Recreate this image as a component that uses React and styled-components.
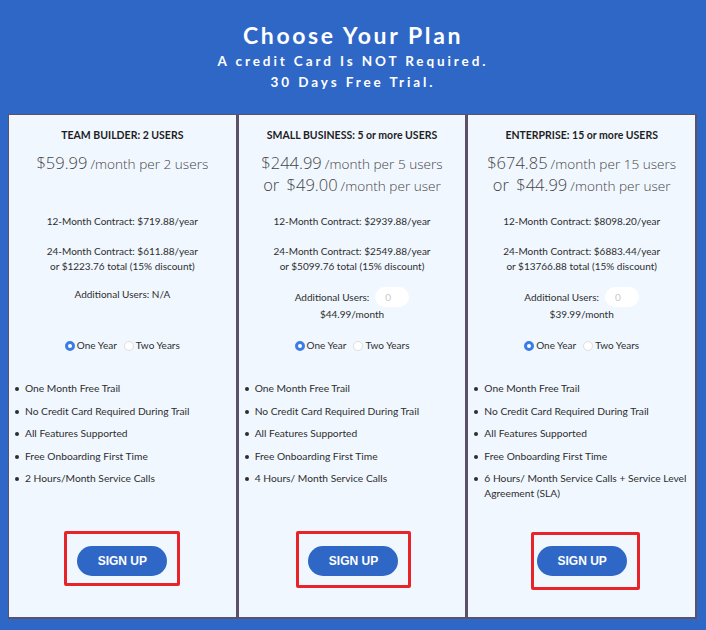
import React from 'react'
import styled, { createGlobalStyle } from 'styled-components'

const GlobalStyle = createGlobalStyle`
  html, body {
    margin: 0;
    padding: 0;
    background: #2f67c7;
  }
  * { box-sizing: border-box; }
`

const Page = styled.div`
  width: 706px;
  min-height: 630px;
  background: #2f67c7;
  padding-top: 21px;
  font-family: Lato, "Open Sans", sans-serif;
`

const Header = styled.header`
  display: flex;
  flex-direction: column;
  align-items: center;
  color: white;
  margin-bottom: 21px;
`

const Title = styled.h1`
  margin: 0;
  font-size: 23px;
  line-height: 28px;
  font-weight: 700;
  letter-spacing: 2.6px;
`

const Sub = styled.p`
  margin: 2px 0 0;
  font-size: 13.5px;
  line-height: 21px;
  font-weight: 700;
  letter-spacing: 2.9px;
  text-align: center;
`

const Cards = styled.div`
  display: grid;
  grid-template-columns: repeat(3, 1fr);
  padding: 0 9px 0 8px;
`

const Card = styled.div`
  min-height: 505px;
  background: #f1f7fe;
  border: 1px solid #5b5269;
  border-right-width: 2px;
  border-bottom-width: 2px;
  padding: 13px 6px 0;
  display: flex;
  flex-direction: column;
  color: #2e2e2e;
`

const PlanName = styled.h2`
  margin: 0;
  font-size: 10.5px;
  line-height: 14px;
  font-weight: 700;
  text-align: center;
  color: #1e1e1e;
`

const PriceBlock = styled.div`
  margin-top: 11px;
  height: 44px;
  font-family: "Open Sans", sans-serif;
  font-weight: 300;
  color: #454545;
  text-align: center;
`

const PriceLine = styled.div`
  height: 22px;
  font-size: 13.6px;
  line-height: 22px;
  white-space: nowrap;
`

const Amount = styled.span`
  font-size: 16.5px;
  line-height: 1;
  margin-right: 3px;
`

const Info = styled.p`
  margin: ${p => p.top || 0}px 0 0;
  font-size: 10px;
  line-height: 15px;
  text-align: center;
`

const AddBlock = styled.div`
  margin-top: 13px;
  height: 36px;
  display: flex;
  flex-direction: column;
  align-items: center;
  font-size: 10px;
  line-height: 15px;
`

const AddRow = styled.div`
  display: flex;
  align-items: center;
  gap: 6px;
`

const Qty = styled.input`
  width: 34px;
  height: 20px;
  border: none;
  border-radius: 10px;
  background: white;
  padding: 0 10px;
  font-family: Lato, sans-serif;
  font-size: 10px;
  outline: none;
  &::placeholder { color: #c8c8c8; }
`

const RadioRow = styled.div`
  margin-top: 15px;
  display: flex;
  justify-content: center;
  align-items: center;
  font-size: 10px;
  line-height: 15px;
`

const RadioLabel = styled.label`
  display: flex;
  align-items: center;
  margin-right: ${p => (p.first ? '7px' : '0')};
`

const Dot = styled.span`
  width: 10px;
  height: 10px;
  border-radius: 50%;
  margin-right: 2px;
  flex: none;
  background: ${p => (p.on ? '#3b7de8' : 'white')};
  border: ${p => (p.on ? '3px solid #3b7de8' : '1px solid #dedede')};
  position: relative;
  &::after {
    content: '';
    display: ${p => (p.on ? 'block' : 'none')};
    position: absolute;
    inset: 0;
    border-radius: 50%;
    background: white;
  }
`

const Features = styled.ul`
  list-style: none;
  margin: 28px 0 0;
  padding: 0;
`

const Feature = styled.li`
  display: flex;
  gap: 6px;
  font-size: 10.25px;
  line-height: 15px;
  margin-bottom: 7.5px;
  &::before {
    content: '';
    flex: none;
    width: 4px;
    height: 4px;
    margin-top: 6px;
    border-radius: 50%;
    background: #2e2e2e;
  }
`

const SignWrap = styled.div`
  margin: auto auto ${p => p.bottom}px;
  border: 3px solid #e8232a;
  border-radius: 2px;
  padding: ${p => p.pad};
  transform: translateX(${p => p.shift}px);
`

const SignButton = styled.button`
  display: block;
  width: 90px;
  height: 30px;
  border: none;
  border-radius: 15px;
  background: #2f67c7;
  color: white;
  font-family: "Liberation Sans", Arial, sans-serif;
  font-weight: 700;
  font-size: 12px;
  cursor: pointer;
`

const plans = [
  {
    name: 'TEAM BUILDER: 2 USERS',
    prices: [['$59.99', '/month per 2 users']],
    year: '$719.88/year',
    two: '$611.88/year',
    total: '$1223.76',
    extra: null,
    features: ['2 Hours/Month Service Calls'],
    pad: '12px 10px 7px 10px',
    bottom: 31,
    shift: 0,
  },
  {
    name: 'SMALL BUSINESS: 5 or more USERS',
    prices: [['$244.99', '/month per 5 users'], ['$49.00', '/month per user', 'or']],
    year: '$2939.88/year',
    two: '$2549.88/year',
    total: '$5099.76',
    extra: '$44.99/month',
    features: ['4 Hours/ Month Service Calls'],
    pad: '12px 10px 9px 9px',
    bottom: 29,
    shift: 2,
  },
  {
    name: 'ENTERPRISE: 15 or more USERS',
    prices: [['$674.85', '/month per 15 users'], ['$44.99', '/month per user', 'or']],
    year: '$8098.20/year',
    two: '$6883.44/year',
    total: '$13766.88',
    extra: '$39.99/month',
    features: ['6 Hours/ Month Service Calls + Service Level Agreement (SLA)'],
    pad: '11px 10px 11px 3px',
    bottom: 27,
    shift: 4,
  },
]

const common = [
  'One Month Free Trail',
  'No Credit Card Required During Trail',
  'All Features Supported',
  'Free Onboarding First Time',
]

const App = () => {
  return (
    <>
      <GlobalStyle />
      <Page>
        <Header>
          <Title>Choose Your Plan</Title>
          <Sub>
            A credit Card Is NOT Required.
            <br />
            30 Days Free Trial.
          </Sub>
        </Header>
        <Cards>
          {plans.map(plan => (
            <Card key={plan.name}>
              <PlanName>{plan.name}</PlanName>
              <PriceBlock>
                {plan.prices.map(([amt, per, pre]) => (
                  <PriceLine key={amt}>
                    {pre && <Amount>{pre} </Amount>}
                    <Amount>{amt}</Amount>
                    {per}
                  </PriceLine>
                ))}
              </PriceBlock>
              <Info top={17}>12-Month Contract: {plan.year}</Info>
              <Info top={15}>
                24-Month Contract: {plan.two}
                <br />
                or {plan.total} total (15% discount)
              </Info>
              <AddBlock>
                {plan.extra ? (
                  <>
                    <AddRow>
                      Additional Users: <Qty placeholder="0" />
                    </AddRow>
                    <div>{plan.extra}</div>
                  </>
                ) : (
                  <AddRow>Additional Users: N/A</AddRow>
                )}
              </AddBlock>
              <RadioRow>
                <RadioLabel first>
                  <Dot on />
                  One Year
                </RadioLabel>
                <RadioLabel>
                  <Dot />
                  Two Years
                </RadioLabel>
              </RadioRow>
              <Features>
                {[...common, ...plan.features].map(f => (
                  <Feature key={f}>{f}</Feature>
                ))}
              </Features>
              <SignWrap pad={plan.pad} bottom={plan.bottom} shift={plan.shift}>
                <SignButton>SIGN UP</SignButton>
              </SignWrap>
            </Card>
          ))}
        </Cards>
      </Page>
    </>
  )
}

export default App
